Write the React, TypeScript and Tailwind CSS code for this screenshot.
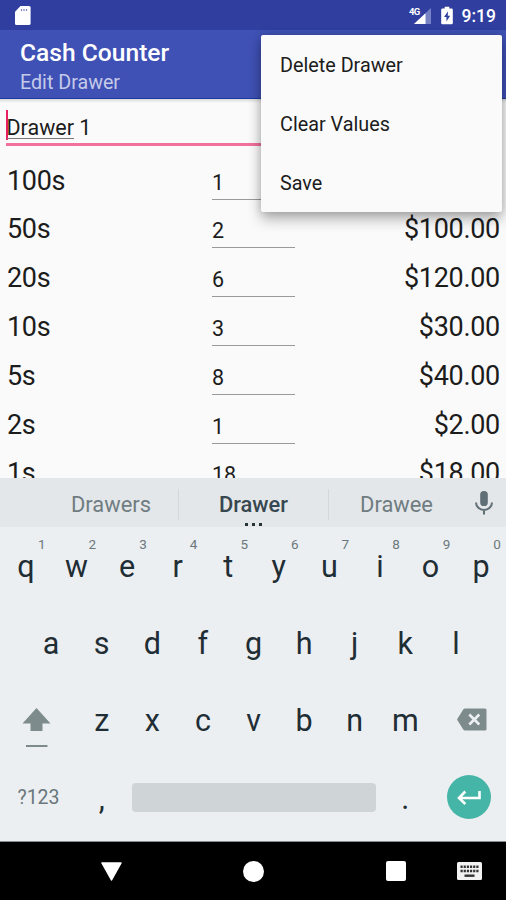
import type { ReactNode } from 'react';

interface DrawerRow {
  label: string;
  count: string;
  total: string;
}

const rows: DrawerRow[] = [
  { label: '100s', count: '1', total: '$100.00' },
  { label: '50s', count: '2', total: '$100.00' },
  { label: '20s', count: '6', total: '$120.00' },
  { label: '10s', count: '3', total: '$30.00' },
  { label: '5s', count: '8', total: '$40.00' },
  { label: '2s', count: '1', total: '$2.00' },
  { label: '1s', count: '18', total: '$18.00' },
];

const menuItems = ['Delete Drawer', 'Clear Values', 'Save'];

const topKeys = ['q', 'w', 'e', 'r', 't', 'y', 'u', 'i', 'o', 'p'];
const middleKeys = ['a', 's', 'd', 'f', 'g', 'h', 'j', 'k', 'l'];
const bottomKeys = ['z', 'x', 'c', 'v', 'b', 'n', 'm'];

function StatusBar() {
  return (
    <div className="flex h-[30px] items-center bg-[#303f9f] pl-[15px] pr-[10px] text-white">
      <svg className="h-[19px] w-4" viewBox="0 0 16 19">
        <path d="M5.5 0H14a1.6 1.6 0 0 1 1.6 1.6v15.8A1.6 1.6 0 0 1 14 19H1.6A1.6 1.6 0 0 1 0 17.400V5.800z" fill="#fff" />
        <path d="M6.500 3v2M9 3v2M11.500 3v2" stroke="#7d87c4" strokeWidth="1.200" />
      </svg>
      <svg className="ml-auto h-[19px] w-[23px]" viewBox="0 0 23 19">
        <path d="M22 2v16H5z" fill="#7682c3" />
        <path d="M16.500 7.200V18H5z" fill="#fff" />
        <text x="0" y="8.500" fill="#fff" fontSize="9.500" fontWeight="700" letterSpacing="-0.6">4G</text>
      </svg>
      <svg className="ml-[9px] h-[19px] w-[12px]" viewBox="0 0 13 19">
        <path d="M4 0h5v2h2.500A1.300 1.300 0 0 1 12.800 3.300v14.400a1.300 1.300 0 0 1-1.300 1.300h-10A1.300 1.300 0 0 1 .2 17.700V3.300A1.300 1.300 0 0 1 1.500 2H4z" fill="#fff" />
        <path d="M7.600 5 3.300 11.200h2.600V16l4-6.200H7.300z" fill="#303f9f" />
      </svg>
      <span className="ml-[9px] pt-[2px] text-[17.5px] font-medium leading-[28px]">9:19</span>
    </div>
  );
}

function AppBar() {
  return (
    <header className="flex h-[69px] flex-col border-b border-[#1a3a9f] bg-[#3f51b5] pl-5 pt-[7px]">
      <h1 className="text-[24.6px] font-medium leading-[31px] text-white">Cash Counter</h1>
      <p className="pt-[1px] text-[19.7px] leading-[27px] text-[#c5cae9]">Edit Drawer</p>
    </header>
  );
}

function OverflowMenu() {
  return (
    <div className="absolute left-[261px] top-[35px] flex h-[177px] w-[241px] flex-col rounded-[2px] bg-[#fafafa] pt-px shadow-[0_7px_14px_rgba(0,0,0,0.3),0_0_8px_rgba(0,0,0,0.15)]">
      {menuItems.map((item) => (
        <button key={item} className="h-[59px] shrink-0 pl-[19px] pt-[1px] text-left text-[19.8px] text-[#1c1c1c]">
          {item}
        </button>
      ))}
    </div>
  );
}

function DrawerForm() {
  return (
    <main className="h-[379px] overflow-hidden bg-[#fafafa] text-[#1c1c1c]">
      <div className="h-1 bg-gradient-to-b from-[#d9d9dc] to-[#fafafa]" />
      <div className="mx-[6px] flex h-[43px] items-center border-b-[3px] border-[#f2709a]">
        <span className="mt-[4px] h-[30px] w-[1.5px] bg-[#e91e63]" />
        <span className="-ml-px mt-[9px] text-[21.5px] leading-[28px]">
          <span className="inline-block h-[25px] border-b border-[#777] leading-[28px]">Drawer</span> 1
        </span>
      </div>
      <div className="pt-[10.6px]">
        {rows.map((row) => (
          <div key={row.label} className="flex h-[48.8px] items-baseline pl-[7px] pr-[6px] text-[27px] leading-[49.6px] tracking-[-0.3px]">
            <span className="w-[205px]">{row.label}</span>
            <span className="w-[83px] border-b-[1.5px] border-[#9a9a9a] text-[21.5px] leading-[32px] tracking-normal">{row.count}</span>
            <span className="ml-auto">{row.total}</span>
          </div>
        ))}
      </div>
    </main>
  );
}

function SuggestionStrip() {
  return (
    <div className="flex h-[49px] items-center bg-[#e4e7e9] pl-[44px] text-[21.9px] text-[#6f7c81]">
      <span className="w-[134px] pt-[5px] text-center">Drawers</span>
      <span className="mt-1 h-[31px] w-px bg-[#d3d8da]" />
      <span className="relative w-[149px] pt-[5px] text-center font-medium text-[#37474f]">
        Drawer
        <span className="absolute -bottom-[5px] left-[66px] flex gap-[4px]">
          <i className="size-[3px] bg-[#263238]" />
          <i className="size-[3px] bg-[#263238]" />
          <i className="size-[3px] bg-[#263238]" />
        </span>
      </span>
      <span className="mt-1 h-[31px] w-px bg-[#d3d8da]" />
      <span className="w-[135px] pt-[5px] text-center">Drawee</span>
      <svg className="ml-[11px] mt-px h-[24px] w-[18px]" viewBox="0 0 18 24">
        <rect x="5.200" y="0" width="7.600" height="15" rx="3.600" fill="#5f6f75" />
        <path d="M1 11.500a8 7.400 0 0 0 16 0M9 19v4.500" fill="none" stroke="#5f6f75" strokeWidth="2" />
      </svg>
    </div>
  );
}

function Key({ children, hint }: { children: ReactNode; hint?: number }) {
  return (
    <span className="relative flex w-[50.6px] shrink-0 items-center justify-center pl-[1px] pt-[2px] text-[30.5px] text-[#1f2d35]">
      {children}
      {hint !== undefined && (
        <span className="absolute left-[38px] top-[10px] text-[13.5px] leading-[15px] text-[#6b777c]">{hint}</span>
      )}
    </span>
  );
}

function Keyboard() {
  return (
    <section className="h-[364px] border-b border-[#8b8e90] bg-[#eceff1]">
      <SuggestionStrip />
      <div className="flex h-[77.3px]">
        {topKeys.map((k, i) => (
          <Key key={k} hint={(i + 1) % 10}>{k}</Key>
        ))}
      </div>
      <div className="flex h-[77.3px] justify-center">
        {middleKeys.map((k) => (
          <Key key={k}>{k}</Key>
        ))}
      </div>
      <div className="flex h-[77.3px]">
        <div className="flex w-[76px] items-center pl-[21.5px]">
          <svg className="mt-[15px] h-[40px] w-[29px]" viewBox="0 0 29 40">
            <path d="M14.500 0 28.500 15.500H20.500V23H8.500V15.500H.5z" fill="#7d8b8d" />
            <path d="M4 38h21.500" stroke="#7d8b8d" strokeWidth="2" />
          </svg>
        </div>
        {bottomKeys.map((k) => (
          <Key key={k}>{k}</Key>
        ))}
        <div className="flex items-center pl-[26.500px]">
          <svg className="-mt-px h-[23px] w-[30px]" viewBox="0 0 30 23">
            <path d="M8 .5h20a1.500 1.500 0 0 1 1.500 1.500v19a1.500 1.500 0 0 1-1.500 1.500H8a2 2 0 0 1-1.600-.8L.6 12.500a1.600 1.600 0 0 1 0-2L6.400 1.300A2 2 0 0 1 8 .5z" fill="#7d8b8d" />
            <path d="m12.300 6.500 10 10m0-10-10 10" stroke="#eceff1" strokeWidth="2.600" />
          </svg>
        </div>
      </div>
      <div className="flex h-[77.3px] items-center">
        <span className="w-[76px] pl-px text-center text-[19.5px] text-[#6b777c]">?123</span>
        <Key>,</Key>
        <span className="ml-[5px] h-[29px] w-[244px] rounded-[4px] bg-[#cfd4d6]" />
        <span className="ml-[4px] flex">
          <Key>.</Key>
        </span>
        <span className="-mt-px ml-[17px] flex size-[44px] items-center justify-center rounded-full bg-[#45b5a7]">
          <svg className="h-[15px] w-[24px]" viewBox="0 0 24 15">
            <path d="M22.500 1v7H2.500M8.300 1.500 2 8l6.300 6" fill="none" stroke="#fff" strokeWidth="2.600" />
          </svg>
        </span>
      </div>
    </section>
  );
}

function NavBar() {
  return (
    <nav className="flex h-[58px] items-center bg-black pl-[101px]">
      <svg className="h-[19px] w-[21px]" viewBox="0 0 21 19">
        <path d="M1 1h19L10.500 18z" fill="#fff" stroke="#fff" strokeWidth="1.500" strokeLinejoin="round" />
      </svg>
      <span className="ml-[121px] size-[21px] rounded-full bg-white" />
      <span className="ml-[122px] size-[20px] rounded-[2px] bg-white" />
      <svg className="ml-[51px] h-[18px] w-[25px]" viewBox="0 0 25 18">
        <rect width="25" height="18" rx="1.500" fill="#f2f2f2" />
        <path d="M3.500 4.800h18M3.500 9h18" stroke="#333" strokeWidth="2.400" strokeDasharray="2.200 0.960" />
        <path d="M7.500 13.700h10" stroke="#333" strokeWidth="2.400" />
      </svg>
    </nav>
  );
}

export default function App() {
  return (
    <div className="relative h-[900px] w-[506px] overflow-hidden font-[Roboto,sans-serif]">
      <StatusBar />
      <AppBar />
      <DrawerForm />
      <Keyboard />
      <NavBar />
      <OverflowMenu />
    </div>
  );
}
